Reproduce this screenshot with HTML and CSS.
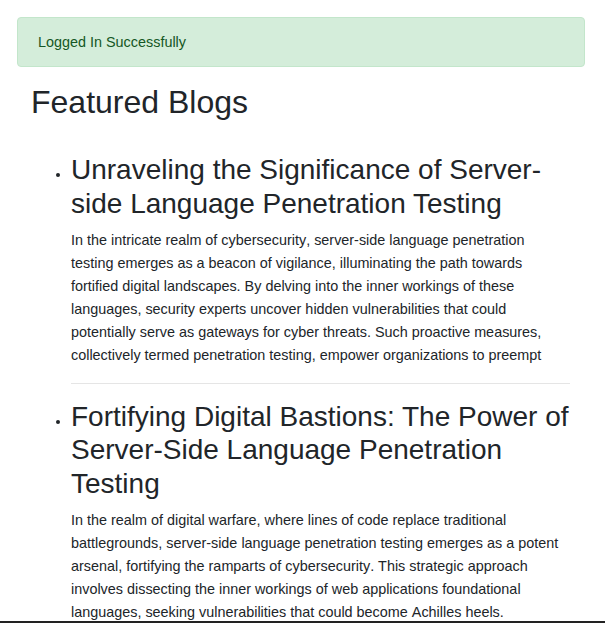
FILE: index.html
```html
<!DOCTYPE html>
<html lang="en">
<head>
<meta charset="utf-8">
<title>Featured Blogs</title>
<link rel="stylesheet" href="styles.css">
</head>
<body>
<div class="page">
  <div class="alert">Logged In Successfully</div>
  <main class="content">
    <h2 class="section-title">Featured Blogs</h2>
    <ul class="blog-list">
      <li class="blog-item">
        <h3 class="blog-title">Unraveling the Significance of Server-side Language Penetration Testing</h3>
        <p class="blog-text">In the intricate realm of cybersecurity, server-side language penetration testing emerges as a beacon of vigilance, illuminating the path towards fortified digital landscapes. By delving into the inner workings of these languages, security experts uncover hidden vulnerabilities that could potentially serve as gateways for cyber threats. Such proactive measures, collectively termed penetration testing, empower organizations to preempt</p>
        <hr class="divider">
      </li>
      <li class="blog-item">
        <h3 class="blog-title">Fortifying Digital Bastions: The Power of Server-Side Language Penetration Testing</h3>
        <p class="blog-text">In the realm of digital warfare, where lines of code replace traditional battlegrounds, server-side language penetration testing emerges as a potent arsenal, fortifying the ramparts of cybersecurity. This strategic approach involves dissecting the inner workings of web applications foundational languages, seeking vulnerabilities that could become Achilles heels.</p>
        <hr class="divider">
      </li>
    </ul>
  </main>
</div>
<div class="bottom-bar"></div>
</body>
</html>
```

FILE: styles.css
```css
html, body {
  margin: 0;
  padding: 0;
  background: #ffffff;
}

body {
  font-family: "Liberation Sans", Arial, Helvetica, sans-serif;
  font-size: 14.4px;
  line-height: 1.6;
  color: #212529;
}

.page {
  padding: 17px 20px 0 17px;
}

.alert {
  background: #d4edda;
  border: 1px solid #c3e6cb;
  border-radius: 4px;
  color: #155724;
  padding: 12px 20px;
  margin-bottom: 16px;
  line-height: 24px;
}

.content {
  padding: 0 15px 0 14px;
}

.section-title {
  font-size: 32px;
  font-weight: 400;
  line-height: 1.2;
  margin: 0 0 32px;
}

.blog-list {
  margin: 0;
  padding-left: 40px;
  list-style: disc;
}

.blog-title {
  font-size: 28px;
  font-weight: 400;
  line-height: 1.2;
  margin: 0 0 8px;
}

.blog-text {
  margin: 0 0 16px;
  font-kerning: none;
}

.divider {
  border: 0;
  border-top: 1px solid rgba(0, 0, 0, 0.1);
  margin: 16px 0;
}

.bottom-bar {
  position: fixed;
  left: 0;
  right: 0;
  bottom: 0;
  height: 2px;
  background: #222222;
}
```
